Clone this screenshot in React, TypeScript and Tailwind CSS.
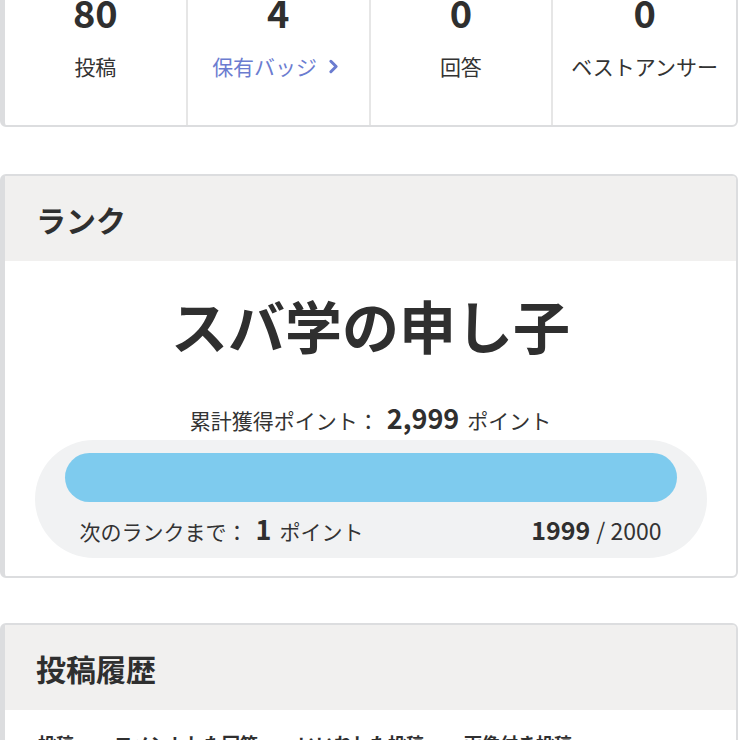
import { ChevronRight } from "lucide-react";

const FONT = { fontFamily: '"Noto Sans CJK JP", "Noto Sans", sans-serif' };

type Stat = { value: string; label: string; link?: boolean };

const STATS: Stat[] = [
  { value: "80", label: "投稿" },
  { value: "4", label: "保有バッジ", link: true },
  { value: "0", label: "回答" },
  { value: "0", label: "ベストアンサー" },
];

const TABS = ["投稿", "コメントした回答", "いいねした投稿", "画像付き投稿"];

function Card({ children, className = "" }: { children: React.ReactNode; className?: string }) {
  return (
    <div
      className={`mr-[2px] overflow-hidden rounded-md border-2 border-l-[5px] border-[#dcdddf] bg-white ${className}`}
    >
      {children}
    </div>
  );
}

function CardHeader({ title }: { title: string }) {
  return (
    <div className="flex h-[85px] items-center bg-[#f1f0ef] px-[31px]">
      <h2 className="text-[30px] font-bold leading-none text-[#2f2f2f]">{title}</h2>
    </div>
  );
}

export default function App() {
  return (
    <div style={FONT} className="-mt-[45px] min-h-screen bg-white text-[#333]">
      <Card>
        <div className="grid grid-cols-4 divide-x-2 divide-[#e6e6e6] pt-[29px]">
          {STATS.map((s) => (
            <div key={s.label} className="flex flex-col items-center pb-[44px]">
              <div className="text-[38px] font-bold leading-[52px] text-[#2f2f2f]">{s.value}</div>
              {s.link ? (
                <div className="mt-[13px] flex items-center gap-[6px] text-[21px] leading-[30px] text-[#6b7cd0]">
                  保有バッジ
                  <ChevronRight size={21} strokeWidth={3.5} />
                </div>
              ) : (
                <div className="mt-[13px] text-[21px] leading-[30px] text-[#333]">{s.label}</div>
              )}
            </div>
          ))}
        </div>
      </Card>

      <Card className="mt-[47px]">
        <CardHeader title="ランク" />
        <div className="flex flex-col items-center pt-[27px] pb-[18px]">
          <div className="text-[57px] font-bold leading-[72px] text-[#2f2f2f]">スバ学の申し子</div>
          <div className="mt-[43px] flex items-baseline gap-[8px] text-[21px] leading-[30px] text-[#333]">
            <span>累計獲得ポイント：</span>
            <span className="text-[27px] font-bold text-[#2f2f2f]">2,999</span>
            <span>ポイント</span>
          </div>
          <div className="mt-[5px] w-[672px] rounded-full bg-[#f1f2f3] px-[30px] pt-[13px] pb-[12px]">
            <div className="h-[49px] rounded-full bg-[#7ecbee]" />
            <div className="mt-[12px] flex items-baseline justify-between px-[15px] leading-[30px]">
              <div className="flex items-baseline gap-[8px] text-[21px]">
                <span>次のランクまで：</span>
                <span className="text-[27px] font-bold text-[#2f2f2f]">1</span>
                <span>ポイント</span>
              </div>
              <div className="flex items-baseline gap-[6px]">
                <span className="text-[25px] font-bold text-[#2f2f2f]">1999</span>
                <span className="text-[23px]">/ 2000</span>
              </div>
            </div>
          </div>
        </div>
      </Card>

      <Card className="mt-[45px]">
        <CardHeader title="投稿履歴" />
        <div className="flex gap-[40px] px-[33px] pt-[18px] pb-[20px] text-[18px] font-bold leading-[30px] text-[#2f2f2f]">
          {TABS.map((t) => (
            <span key={t}>{t}</span>
          ))}
        </div>
      </Card>
    </div>
  );
}
